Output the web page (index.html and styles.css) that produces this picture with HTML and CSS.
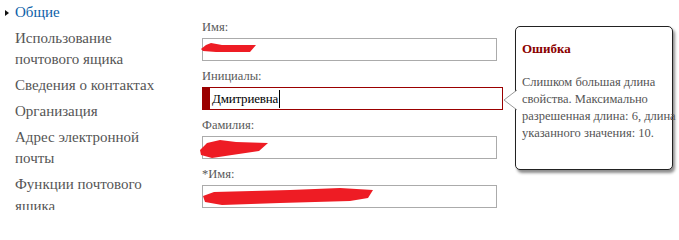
FILE: index.html
```html
<!DOCTYPE html>
<html lang="ru">
<head>
<meta charset="utf-8">
<title>Общие</title>
<link rel="stylesheet" href="styles.css">
</head>
<body>
<div class="page">
  <nav class="sidebar">
    <ul class="menu">
      <li class="menu-item active"><span class="marker"></span>Общие</li>
      <li class="menu-item">Использование почтового ящика</li>
      <li class="menu-item">Сведения о контактах</li>
      <li class="menu-item">Организация</li>
      <li class="menu-item">Адрес электронной почты</li>
      <li class="menu-item">Функции почтового ящика</li>
    </ul>
  </nav>
  <main class="form">
    <div class="field">
      <div class="label">Имя:</div>
      <div class="box">
        <svg class="redact" width="300" height="21" viewBox="202 38 300 21"><polygon points="201,49 206,45 211,43 222,45 256,45 250,52 216,52 203,51" fill="#ee1c24"/></svg>
      </div>
    </div>
    <div class="field">
      <div class="label">Инициалы:</div>
      <div class="box invalid"><span class="value">Дмитриевна</span><span class="caret"></span></div>
    </div>
    <div class="field">
      <div class="label">Фамилия:</div>
      <div class="box">
        <svg class="redact" width="300" height="21" viewBox="202 136 300 21"><polygon points="200,150 207,143 220,140 236,142 268,143 259,151 232,155 212,158 201,155" fill="#ee1c24"/></svg>
      </div>
    </div>
    <div class="field">
      <div class="label">*Имя:</div>
      <div class="box">
        <svg class="redact" width="300" height="21" viewBox="202 185 300 21"><polygon points="203,196 214,192 290,190 340,188 373,190 368,198 350,201 280,203 222,205 205,202" fill="#ee1c24"/></svg>
      </div>
    </div>
  </main>
  <div class="tooltip">
    <svg class="pointer" width="16" height="24" viewBox="0 0 16 24"><polyline points="15,1 2,11 15,21" fill="#fff" stroke="#9a9a9a" stroke-width="1"/></svg>
    <div class="tip-title">Ошибка</div>
    <p class="tip-text"><span class="tip-line">Слишком большая длина</span> <span class="tip-line">свойства. Максимально</span> <span class="tip-line">разрешенная длина: 6, длина</span> <span class="tip-line">указанного значения: 10.</span></p>
  </div>
</div>
</body>
</html>
```
FILE: styles.css
```css
html, body {
  margin: 0;
  padding: 0;
  background: #fff;
}
body {
  width: 679px;
  height: 210px;
  overflow: hidden;
  font-family: "Liberation Serif", "Times New Roman", serif;
}
.page {
  position: relative;
  display: flex;
  height: 210px;
}
.sidebar {
  width: 202px;
  flex: none;
}
.menu {
  list-style: none;
  margin: 0;
  padding: 2px 0 0 15px;
  width: 150px;
  display: flex;
  flex-direction: column;
  gap: 4px;
}
.menu-item {
  position: relative;
  font-size: 15px;
  line-height: 21.7px;
  color: #555;
}
.menu-item.active {
  color: #0c5ea8;
}
.marker {
  position: absolute;
  left: -10px;
  top: 8px;
  width: 0;
  height: 0;
  border-top: 3px solid transparent;
  border-bottom: 3px solid transparent;
  border-left: 4px solid #111;
}
.form {
  padding-top: 19px;
  width: 300px;
  display: flex;
  flex-direction: column;
  gap: 7px;
}
.label {
  font-size: 12.5px;
  line-height: 16px;
  color: #5a5a5a;
  margin-bottom: 3px;
}
.box {
  box-sizing: border-box;
  width: 295px;
  height: 23px;
  border: 1px solid #ababab;
  position: relative;
}
.redact {
  display: block;
  margin: -1px 0 0 -1px;
  overflow: visible;
}
.box.invalid {
  width: 301px;
  border: 1px solid #9b0000;
  border-left: 8px solid #9b0000;
  display: flex;
  align-items: center;
  padding-left: 2px;
}
.value {
  font-size: 13px;
  color: #000;
  line-height: 18px;
  letter-spacing: -0.2px;
}
.caret {
  width: 1px;
  height: 18px;
  background: #000;
  margin-left: 1px;
}
.tooltip {
  position: absolute;
  left: 515px;
  top: 26px;
  width: 158px;
  height: 144px;
  box-sizing: border-box;
  border: 1px solid #222;
  border-radius: 5px;
  background: #fff;
  box-shadow: 2px 3px 3px rgba(0, 0, 0, 0.45);
  padding: 13px 0 0 6px;
}
.pointer {
  position: absolute;
  left: -14px;
  top: 62px;
}
.tip-title {
  font-size: 13px;
  font-weight: bold;
  color: #8b0000;
  line-height: 17px;
}
.tip-text {
  margin: 17px 0 0;
  font-size: 12.5px;
  line-height: 17px;
  color: #555;
}
.tip-line {
  display: block;
  white-space: nowrap;
}
```
